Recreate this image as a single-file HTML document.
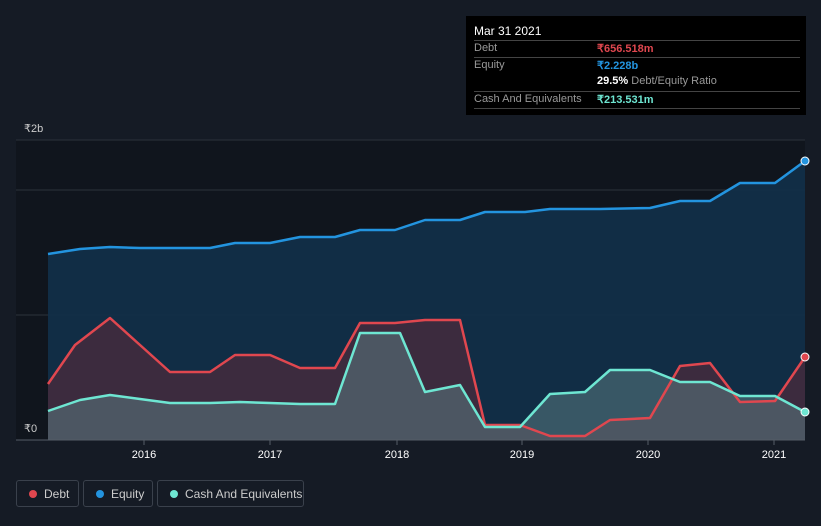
<!DOCTYPE html>
<html><head><meta charset="utf-8"><style>
body{margin:0;width:821px;height:526px;background:#151b25;font-family:"Liberation Sans",sans-serif;overflow:hidden;position:relative}
.tip{position:absolute;left:466px;top:16px;width:340px;height:99px;background:#000;color:#fff;font-size:11px}
.tip .r{position:absolute;left:8px;width:326px;border-top:1px solid #444}
.lbl{color:#999}
.leg{position:absolute;top:480px;height:27px;border:1px solid #3a414c;border-radius:3px;color:#ccc;font-size:12px;line-height:26px;box-sizing:border-box;padding-left:27px;white-space:nowrap}
.leg i{position:absolute;left:12px;top:9px;width:8px;height:8px;border-radius:50%}
</style></head><body>
<svg width="821" height="526" style="position:absolute;left:0;top:0">
<rect x="16" y="140" width="789" height="300" fill="#10151d"/>
<line x1="16" y1="140" x2="805" y2="140" stroke="#2c323b"/>
<line x1="16" y1="190" x2="805" y2="190" stroke="#2c323b"/>
<line x1="16" y1="315" x2="805" y2="315" stroke="#2c323b"/>
<path d="M48,254 L80,249 110,247 140,248 210,248 235,243 270,243 300,237 335,237 360,230 395,230 425,220 460,220 485,212 525,212 550,209 600,209 650,208 680,201 710,201 740,183 775,183 805,161 L805,440 48,440Z" fill="#12304a" opacity="0.9"/>
<path d="M48,384 L75,345 110,318 140,345 170,372 210,372 235,355 270,355 300,368 335,368 360,323 395,323 425,320 460,320 485,425 520,425 550,436 585,436 610,420 650,418 680,366 710,363 740,402 775,401 805,357 L805,440 48,440Z" fill="#5a2a3a" opacity="0.6"/>
<path d="M48,411 L80,400 110,395 140,399 170,403 210,403 240,402 270,403 300,404 335,404 360,333 400,333 425,392 460,385 485,427 520,427 550,394 585,392 610,370 650,370 680,382 710,382 740,396 775,396 805,412 L805,440 48,440Z" fill="#5a7a80" opacity="0.55"/>
<path d="M48,254 L80,249 110,247 140,248 210,248 235,243 270,243 300,237 335,237 360,230 395,230 425,220 460,220 485,212 525,212 550,209 600,209 650,208 680,201 710,201 740,183 775,183 805,161" fill="none" stroke="#2394df" stroke-width="2.5" stroke-linejoin="round"/>
<path d="M48,384 L75,345 110,318 140,345 170,372 210,372 235,355 270,355 300,368 335,368 360,323 395,323 425,320 460,320 485,425 520,425 550,436 585,436 610,420 650,418 680,366 710,363 740,402 775,401 805,357" fill="none" stroke="#e0474f" stroke-width="2.5" stroke-linejoin="round"/>
<path d="M48,411 L80,400 110,395 140,399 170,403 210,403 240,402 270,403 300,404 335,404 360,333 400,333 425,392 460,385 485,427 520,427 550,394 585,392 610,370 650,370 680,382 710,382 740,396 775,396 805,412" fill="none" stroke="#6ee6d2" stroke-width="2.5" stroke-linejoin="round"/>
<circle cx="805" cy="161" r="4" fill="#2394df" stroke="#fff" stroke-width="1"/>
<circle cx="805" cy="357" r="4" fill="#e0474f" stroke="#fff" stroke-width="1"/>
<circle cx="805" cy="412" r="4" fill="#6ee6d2" stroke="#fff" stroke-width="1"/>
<line x1="16" y1="440" x2="805" y2="440" stroke="#555c66"/>
<g stroke="#555c66"><line x1="144" y1="440" x2="144" y2="445"/><line x1="270" y1="440" x2="270" y2="445"/><line x1="397" y1="440" x2="397" y2="445"/><line x1="522" y1="440" x2="522" y2="445"/><line x1="648" y1="440" x2="648" y2="445"/><line x1="774" y1="440" x2="774" y2="445"/></g>
<g fill="#fff" font-size="11" font-family="Liberation Sans,sans-serif" text-anchor="middle"><text x="144" y="458">2016</text><text x="270" y="458">2017</text><text x="397" y="458">2018</text><text x="522" y="458">2019</text><text x="648" y="458">2020</text><text x="774" y="458">2021</text></g>
<rect x="16" y="420" width="32" height="19" fill="#10151d"/>
<text x="24" y="432" fill="#ccc" font-size="11">₹0</text>
<text x="24" y="132" fill="#ccc" font-size="11">₹2b</text>
</svg>
<div class="tip">
<div style="position:absolute;left:8px;top:8px;font-size:12px">Mar 31 2021</div>
<div class="r" style="top:24px"></div>
<div class="lbl" style="position:absolute;left:8px;top:26px">Debt</div><div style="position:absolute;left:131px;top:26px;color:#e0474f;font-weight:bold">₹656.518m</div>
<div class="r" style="top:41px"></div>
<div class="lbl" style="position:absolute;left:8px;top:43px">Equity</div><div style="position:absolute;left:131px;top:43px;color:#2394df;font-weight:bold">₹2.228b</div>
<div style="position:absolute;left:131px;top:59px"><b>29.5%</b> <span class="lbl">Debt/Equity Ratio</span></div>
<div class="r" style="top:75px"></div>
<div class="lbl" style="position:absolute;left:8px;top:77px">Cash And Equivalents</div><div style="position:absolute;left:131px;top:77px;color:#6ee6d2;font-weight:bold">₹213.531m</div>
<div class="r" style="top:92px"></div>
</div>
<div class="leg" style="left:16px;width:63px"><i style="background:#e0474f"></i>Debt</div>
<div class="leg" style="left:83px;width:70px"><i style="background:#2394df"></i>Equity</div>
<div class="leg" style="left:157px;width:147px"><i style="background:#6ee6d2"></i>Cash And Equivalents</div>
</body></html>
